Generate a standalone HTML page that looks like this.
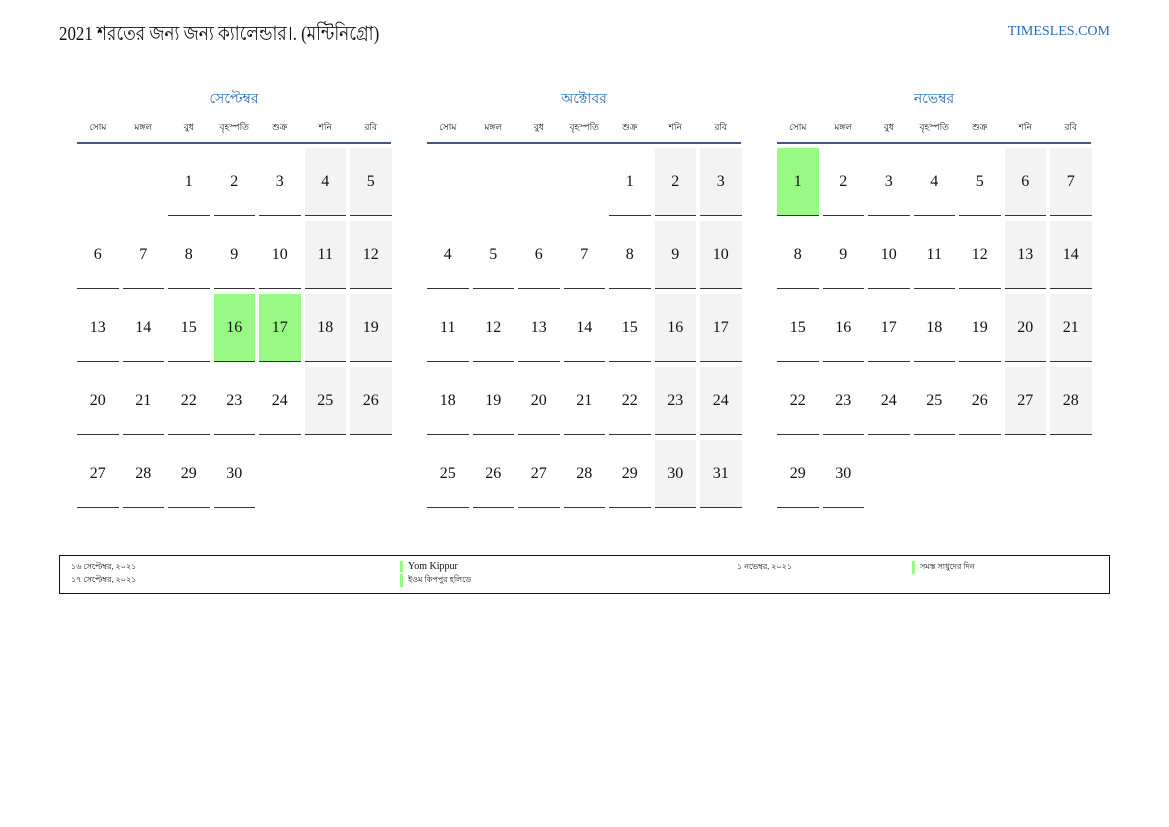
<!DOCTYPE html>
<html><head><meta charset="utf-8"><style>
body{margin:0;width:1169px;height:827px;background:#fff;position:relative;font-family:"Liberation Serif","Noto Serif CJK SC",serif;color:#111;overflow:hidden}
.title{position:absolute;left:59px;top:19px;font-size:20px;font-family:"Liberation Serif","Noto Sans CJK SC",serif;transform:scaleX(0.845);transform-origin:left top;white-space:nowrap}
.site{position:absolute;right:59px;top:24px;font-size:14px;color:#2a6bb5}
.month{position:absolute;top:87px;width:314px}
.mname{text-align:center;color:#2a6bb5;font-size:14px;height:20px;font-family:"Liberation Sans","Noto Sans CJK SC",sans-serif}
.hdr{display:grid;grid-template-columns:repeat(7,41.5px);column-gap:4px;margin-top:13px;height:22px;border-bottom:2px solid #3b5b86;font-size:9px;text-align:center;font-family:"Liberation Sans","Noto Sans CJK SC",sans-serif}
.grid{display:grid;grid-template-columns:repeat(7,41.5px);grid-auto-rows:68px;column-gap:4px;row-gap:5px;margin-top:4px}
.grid div{border-bottom:1px solid #333;display:flex;align-items:center;justify-content:center;font-size:16px}
.grid div.e{border:none}
.grid .w{background:#f3f3f3}
.grid .g{background:#98f985}
.foot{position:absolute;left:59px;top:555px;width:1049px;height:37px;border:1.5px solid #111;font-size:8px;font-family:"Liberation Serif","Noto Sans CJK SC",serif}
.foot span{position:absolute;white-space:nowrap}
.bar{border-left:3px solid #98f985;padding-left:5px}
</style></head><body>
<div class="title">2021 শরতের জন্য জন্য ক্যালেন্ডার।. (মন্টিনিগ্রো)</div>
<div class="site">TIMESLES.COM</div>

<div class="month" style="left:77px">
<div class="mname">সেপ্টেম্বর</div>
<div class="hdr"><span>সোম</span><span>মঙ্গল</span><span>বুধ</span><span>বৃহস্পতি</span><span>শুক্র</span><span>শনি</span><span>রবি</span></div>
<div class="grid">
<div class="e"></div><div class="e"></div><div>1</div><div>2</div><div>3</div><div class="w">4</div><div class="w">5</div>
<div>6</div><div>7</div><div>8</div><div>9</div><div>10</div><div class="w">11</div><div class="w">12</div>
<div>13</div><div>14</div><div>15</div><div class="g">16</div><div class="g">17</div><div class="w">18</div><div class="w">19</div>
<div>20</div><div>21</div><div>22</div><div>23</div><div>24</div><div class="w">25</div><div class="w">26</div>
<div>27</div><div>28</div><div>29</div><div>30</div>
</div></div>

<div class="month" style="left:427px">
<div class="mname">অক্টোবর</div>
<div class="hdr"><span>সোম</span><span>মঙ্গল</span><span>বুধ</span><span>বৃহস্পতি</span><span>শুক্র</span><span>শনি</span><span>রবি</span></div>
<div class="grid">
<div class="e"></div><div class="e"></div><div class="e"></div><div class="e"></div><div>1</div><div class="w">2</div><div class="w">3</div>
<div>4</div><div>5</div><div>6</div><div>7</div><div>8</div><div class="w">9</div><div class="w">10</div>
<div>11</div><div>12</div><div>13</div><div>14</div><div>15</div><div class="w">16</div><div class="w">17</div>
<div>18</div><div>19</div><div>20</div><div>21</div><div>22</div><div class="w">23</div><div class="w">24</div>
<div>25</div><div>26</div><div>27</div><div>28</div><div>29</div><div class="w">30</div><div class="w">31</div>
</div></div>

<div class="month" style="left:777px">
<div class="mname">নভেম্বর</div>
<div class="hdr"><span>সোম</span><span>মঙ্গল</span><span>বুধ</span><span>বৃহস্পতি</span><span>শুক্র</span><span>শনি</span><span>রবি</span></div>
<div class="grid">
<div class="g">1</div><div>2</div><div>3</div><div>4</div><div>5</div><div class="w">6</div><div class="w">7</div>
<div>8</div><div>9</div><div>10</div><div>11</div><div>12</div><div class="w">13</div><div class="w">14</div>
<div>15</div><div>16</div><div>17</div><div>18</div><div>19</div><div class="w">20</div><div class="w">21</div>
<div>22</div><div>23</div><div>24</div><div>25</div><div>26</div><div class="w">27</div><div class="w">28</div>
<div>29</div><div>30</div>
</div></div>

<div class="foot">
<span style="left:11px;top:5px">১৬ সেপ্টেম্বর, ২০২১</span>
<span style="left:11px;top:18px">১৭ সেপ্টেম্বর, ২০২১</span>
<span class="bar" style="left:340px;top:5px;font-size:10px;font-family:'Liberation Serif',serif">Yom Kippur</span>
<span class="bar" style="left:340px;top:18px">ইওম কিপপুর হলিডে</span>
<span style="left:677px;top:5px">১ নভেম্বর, ২০২১</span>
<span class="bar" style="left:852px;top:5px">সমস্ত সাধুদের দিন</span>
</div>
</body></html>
